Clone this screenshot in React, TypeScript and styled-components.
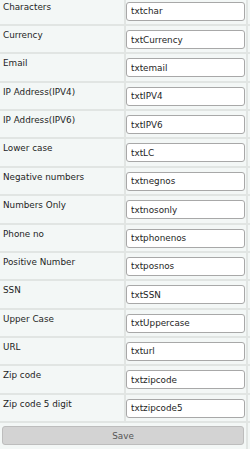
import React from "react";
import styled, { createGlobalStyle } from "styled-components";

const GlobalStyle = createGlobalStyle`
  html, body {
    margin: 0;
    padding: 0;
    overflow: hidden;
    background: #ffffff;
  }
`;

const fields = [
  { label: "Characters", name: "txtchar" },
  { label: "Currency", name: "txtCurrency" },
  { label: "Email", name: "txtemail" },
  { label: "IP Address(IPV4)", name: "txtIPV4" },
  { label: "IP Address(IPV6)", name: "txtIPV6" },
  { label: "Lower case", name: "txtLC" },
  { label: "Negative numbers", name: "txtnegnos" },
  { label: "Numbers Only", name: "txtnosonly" },
  { label: "Phone no", name: "txtphonenos" },
  { label: "Positive Number", name: "txtposnos" },
  { label: "SSN", name: "txtSSN" },
  { label: "Upper Case", name: "txtUppercase" },
  { label: "URL", name: "txturl" },
  { label: "Zip code", name: "txtzipcode" },
  { label: "Zip code 5 digit", name: "txtzipcode5" },
];

const Form = styled.div`
  display: grid;
  grid-template-columns: 124px 120px 2px;
  grid-auto-rows: 26.36px;
  gap: 2px;
  width: 250px;
  margin-top: -2.36px;
  background: #e1e5e3;
  font-family: "DejaVu Sans", Verdana, sans-serif;
  font-size: 8.8px;
  color: #1e1e1e;
`;

const LabelCell = styled.div`
  background: #f3f7f6;
  padding: 4px 3px 0 3px;
  line-height: 11px;
  white-space: nowrap;
`;

const ValueCell = styled.div`
  background: #f3f7f6;
  padding: 4px 1px 0 0;
`;

const EmptyCell = styled.div`
  background: #f3f7f6;
`;

const TextInput = styled.input`
  box-sizing: border-box;
  display: block;
  width: 119px;
  height: 19px;
  margin: 0;
  padding: 0 4px;
  border: 1px solid #a8a8a8;
  border-radius: 3px;
  background: #fff;
  font-family: inherit;
  font-size: 8.8px;
  color: #1e1e1e;
  outline: none;
`;

const ButtonCell = styled.div`
  grid-column: span 2;
  background: #f3f7f6;
  padding: 3px 2px 0 2px;
`;

const SaveButton = styled.button`
  box-sizing: border-box;
  display: block;
  width: 242px;
  height: 19px;
  margin: 0;
  padding: 0;
  border: 1px solid #bdbdbd;
  border-radius: 3px;
  background: #d3d3d3;
  font-family: inherit;
  font-size: 8.8px;
  color: #555;
`;

export default function App() {
  return (
    <>
      <GlobalStyle />
      <Form>
        {fields.map((f) => (
          <React.Fragment key={f.name}>
            <LabelCell>{f.label}</LabelCell>
            <ValueCell>
              <TextInput defaultValue={f.name} />
            </ValueCell>
            <EmptyCell />
          </React.Fragment>
        ))}
        <ButtonCell>
          <SaveButton>Save</SaveButton>
        </ButtonCell>
        <EmptyCell />
      </Form>
    </>
  );
}
